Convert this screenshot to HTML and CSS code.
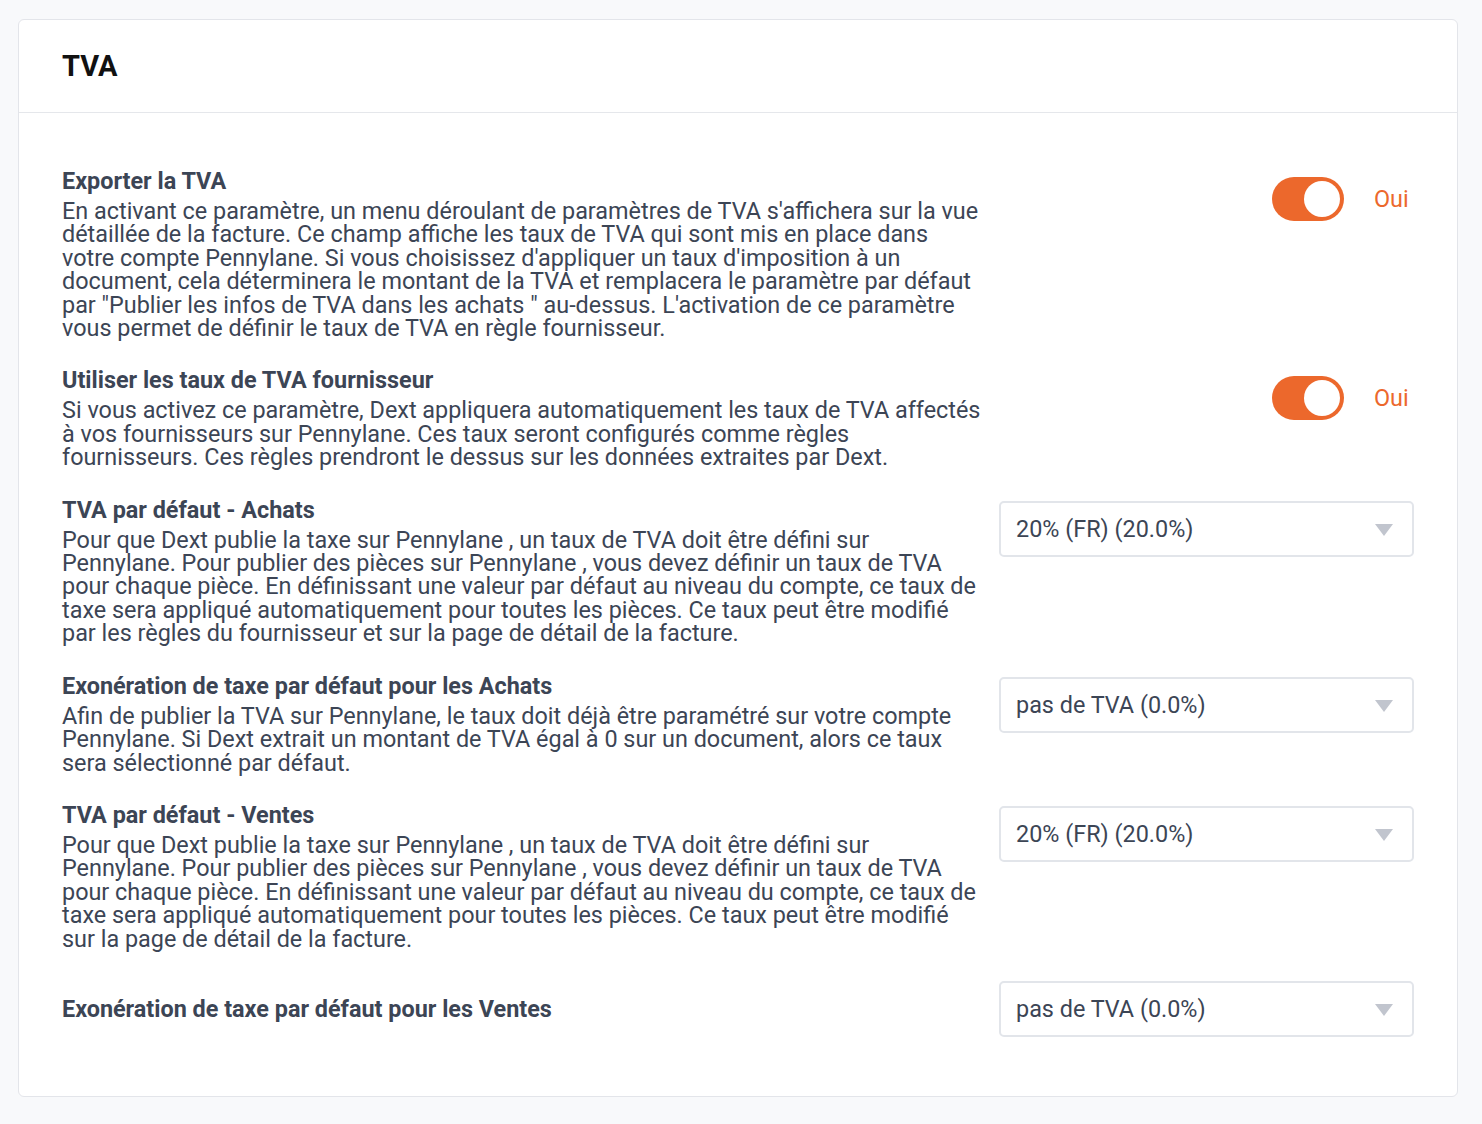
FILE: index.html
```html
<html lang="fr">
<head>
    <meta charset="UTF-8">
    <meta name="viewport" content="width=device-width, initial-scale=1.0">
    <title>TVA</title>

    <link rel="stylesheet" href="styles.css">
</head>
<body>
    <section class="card">
        <header class="card-head">
            <h1>TVA</h1>
        </header>

        <div class="card-body">
            <div class="row">
                <div class="text">
                    <h2>Exporter la TVA</h2>
                    <p>En activant ce paramètre, un menu déroulant de paramètres de TVA s'affichera sur la vue détaillée de la facture. Ce champ affiche les taux de TVA qui sont mis en place dans votre compte Pennylane. Si vous choisissez d'appliquer un taux d'imposition à un document, cela déterminera le montant de la TVA et remplacera le paramètre par défaut par "Publier les infos de TVA dans les achats " au-dessus. L'activation de ce paramètre vous permet de définir le taux de TVA en règle fournisseur.</p>
                </div>
                <div class="control">
                    <div class="switch-wrap">
                        <span class="switch on"><span class="knob"></span></span>
                        <span class="switch-label">Oui</span>
                    </div>
                </div>
            </div>

            <div class="row">
                <div class="text">
                    <h2>Utiliser les taux de TVA fournisseur</h2>
                    <p>Si vous activez ce paramètre, Dext appliquera automatiquement les taux de TVA affectés à vos fournisseurs sur Pennylane. Ces taux seront configurés comme règles fournisseurs. Ces règles prendront le dessus sur les données extraites par Dext.</p>
                </div>
                <div class="control">
                    <div class="switch-wrap">
                        <span class="switch on"><span class="knob"></span></span>
                        <span class="switch-label">Oui</span>
                    </div>
                </div>
            </div>

            <div class="row">
                <div class="text">
                    <h2>TVA par défaut - Achats</h2>
                    <p>Pour que Dext publie la taxe sur Pennylane , un taux de TVA doit être défini sur Pennylane. Pour publier des pièces sur Pennylane , vous devez définir un taux de TVA pour chaque pièce. En définissant une valeur par défaut au niveau du compte, ce taux de taxe sera appliqué automatiquement pour toutes les pièces. Ce taux peut être modifié par les règles du fournisseur et sur la page de détail de la facture.</p>
                </div>
                <div class="control">
                    <div class="select">
                        <span>20% (FR) (20.0%)</span>
                        <span class="caret"></span>
                    </div>
                </div>
            </div>

            <div class="row">
                <div class="text">
                    <h2>Exonération de taxe par défaut pour les Achats</h2>
                    <p>Afin de publier la TVA sur Pennylane, le taux doit déjà être paramétré sur votre compte Pennylane. Si Dext extrait un montant de TVA égal à 0 sur un document, alors ce taux sera sélectionné par défaut.</p>
                </div>
                <div class="control">
                    <div class="select">
                        <span>pas de TVA (0.0%)</span>
                        <span class="caret"></span>
                    </div>
                </div>
            </div>

            <div class="row">
                <div class="text">
                    <h2>TVA par défaut - Ventes</h2>
                    <p>Pour que Dext publie la taxe sur Pennylane , un taux de TVA doit être défini sur Pennylane. Pour publier des pièces sur Pennylane , vous devez définir un taux de TVA pour chaque pièce. En définissant une valeur par défaut au niveau du compte, ce taux de taxe sera appliqué automatiquement pour toutes les pièces. Ce taux peut être modifié sur la page de détail de la facture.</p>
                </div>
                <div class="control">
                    <div class="select">
                        <span>20% (FR) (20.0%)</span>
                        <span class="caret"></span>
                    </div>
                </div>
            </div>

            <div class="row row-center">
                <div class="text">
                    <h2>Exonération de taxe par défaut pour les Ventes</h2>
                </div>
                <div class="control">
                    <div class="select">
                        <span>pas de TVA (0.0%)</span>
                        <span class="caret"></span>
                    </div>
                </div>
            </div>
        </div>
    </section>
</body>
</html>
```

FILE: styles.css
```css
body{
    margin: 0;
    background-color: #f8f9fb;
    font-family: Roboto, 'Noto Sans', sans-serif;
    color: #3c4555;
}
.card{
    margin: 19px 24px 0 18px;
    background: #fff;
    border: 1px solid #e3e5ea;
    border-radius: 6px;
}
.card-head{
    height: 92px;
    display: flex;
    align-items: center;
    padding: 0 43px;
    border-bottom: 1px solid #e5e7eb;
}
h1{
    margin: 0;
    font-size: 29px;
    font-weight: 700;
    color: #111;
}
.card-body{
    padding: 55px 43px 59px 43px;
    display: flex;
    flex-direction: column;
    gap: 27px;
}
.row{
    display: flex;
    align-items: flex-start;
    gap: 17px;
}
.row-center{
    align-items: center;
    margin-top: 3px;
}
.text{
    flex: 1;
}
h2{
    margin: 0;
    font-size: 23.4px;
    line-height: 26px;
    font-weight: 700;
}
.text p{
    margin: 6px 0 0 0;
    font-size: 23.4px;
    line-height: 23.4px;
}
.control{
    width: 415px;
    flex-shrink: 0;
}
.switch-wrap{
    display: flex;
    align-items: center;
    justify-content: flex-end;
    gap: 30px;
    margin-top: 9px;
}
.switch{
    width: 72px;
    height: 44px;
    border-radius: 22px;
    background: #ec682c;
    display: flex;
    align-items: center;
    padding: 4px;
    box-sizing: border-box;
}
.switch.on{
    justify-content: flex-end;
}
.knob{
    width: 36px;
    height: 36px;
    border-radius: 50%;
    background: #fff;
}
.switch-label{
    width: 40px;
    color: #ec682c;
    font-size: 23.4px;
}
.select{
    margin-top: 4px;
    height: 56px;
    box-sizing: border-box;
    border: 2px solid #e2e5ea;
    border-radius: 5px;
    display: flex;
    align-items: center;
    justify-content: space-between;
    padding: 0 19px 0 15px;
    font-size: 23.4px;
}
.row-center .select{
    margin-top: 0;
}
.caret{
    width: 0;
    height: 0;
    border-left: 9px solid transparent;
    border-right: 9px solid transparent;
    border-top: 12px solid #c1c5ce;
    margin-top: 2px;
}
```
